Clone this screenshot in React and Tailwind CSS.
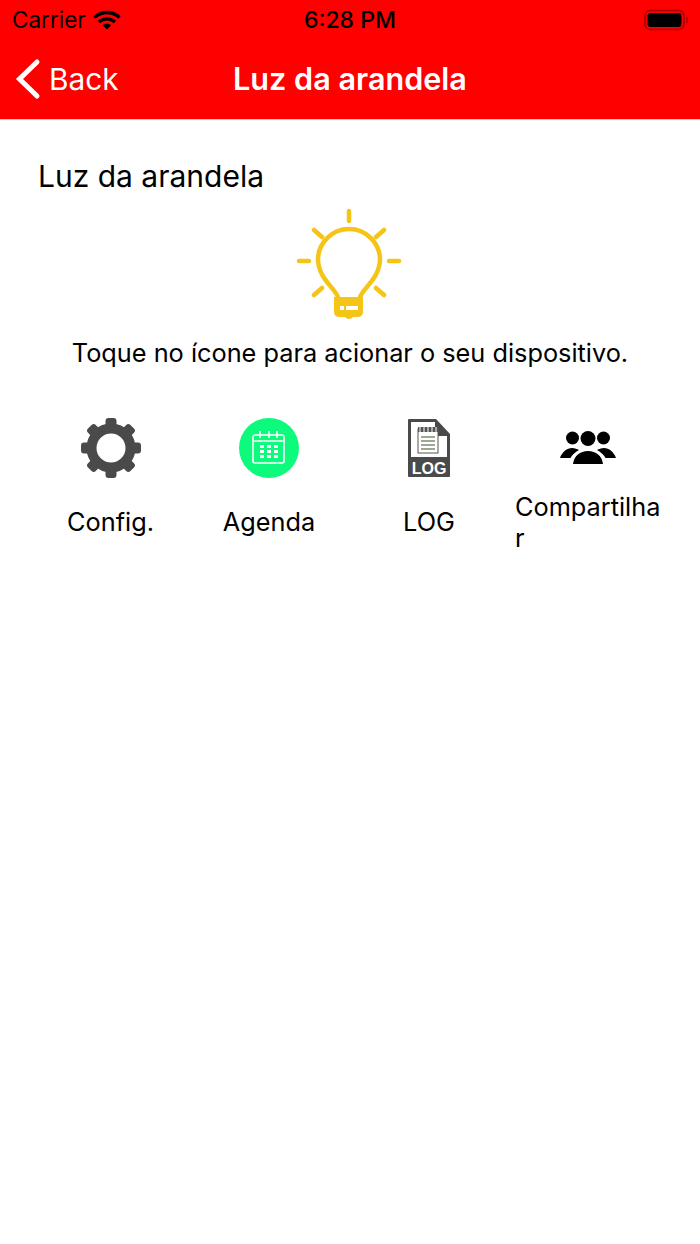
const WifiIcon = () => (
    <svg width="28" height="20" viewBox="0 0 28 20" fill="none" stroke="#000" strokeWidth="3.4">
        <path d="M1.5 7.5C8.5 0.8 19.5 0.8 26.5 7.5" />
        <path d="M6 12C10.5 7.8 17.5 7.8 22 12" />
        <path d="M14 19.5L9.8 15.3C12.2 13.3 15.8 13.3 18.2 15.3Z" fill="#000" stroke="none" />
    </svg>
);

const BatteryIcon = () => (
    <svg width="46" height="22" viewBox="0 0 46 22">
        <rect x="1" y="1.5" width="39" height="19" rx="5" fill="none" stroke="#a80000" strokeWidth="1.6" />
        <rect x="3.5" y="4" width="34" height="14" rx="3" fill="#000" />
        <rect x="42" y="8" width="2" height="6" rx="1" fill="#a80000" />
    </svg>
);

const BackChevron = () => (
    <svg width="28" height="42" viewBox="0 0 28 42" fill="none" stroke="#fff" strokeWidth="5" strokeLinecap="round" strokeLinejoin="miter">
        <path d="M23 4L5.5 21L23 38" />
    </svg>
);

const BulbIcon = () => (
    <svg width="120" height="120" viewBox="290 205 120 120" fill="none" stroke="#f4c417" strokeWidth="4.5" strokeLinecap="round">
        <path d="M349 211V221M299 261H309M389 261H399M314 230L322 237M384 230L376 237M314 295L322 288M384 295L376 288" />
        <path d="M338 297C334 287 319 279 318 260A31 31 0 0 1 380 260C379 279 364 287 360 297" />
        <path d="M334 297H363V312Q363 317 357 317H353Q349 321 345 317H340Q334 317 334 312Z" fill="#f4c417" stroke="none" />
        <rect x="340" y="306" width="4" height="4" fill="#fff" stroke="none" />
        <rect x="346" y="306" width="12" height="4" fill="#fff" stroke="none" />
    </svg>
);

const GearIcon = () => (
    <svg width="62" height="62" viewBox="0 0 62 62" fill="none">
        <circle cx="31" cy="31" r="19.5" stroke="#4a4a4a" strokeWidth="10" />
        <g fill="#4a4a4a">
            {[0, 45, 90, 135, 180, 225, 270, 315].map((angle) => (
                <rect key={angle} x="25.5" y="1" width="11" height="14" rx="3" transform={`rotate(${angle} 31 31)`} />
            ))}
        </g>
    </svg>
);

const CalendarIcon = () => (
    <svg width="60" height="60" viewBox="0 0 60 60" fill="none">
        <circle cx="30" cy="30" r="30" fill="#0dfb7c" />
        <g stroke="#fff" strokeWidth="1.6">
            <rect x="14" y="17" width="31" height="28" rx="2" />
            <path d="M14 23H45M21 13V20M30 13V20M38 13V20" />
        </g>
        <g fill="#fff">
            <rect x="21" y="27" width="4" height="3" /><rect x="28" y="27" width="4" height="3" /><rect x="35" y="27" width="4" height="3" />
            <rect x="21" y="32" width="4" height="3" /><rect x="28" y="32" width="4" height="3" /><rect x="35" y="32" width="4" height="3" />
            <rect x="21" y="37" width="4" height="3" /><rect x="28" y="37" width="4" height="3" /><rect x="35" y="37" width="4" height="3" />
        </g>
    </svg>
);

const LogIcon = () => (
    <svg width="44" height="60" viewBox="0 0 44 60">
        <path d="M2 1H29L43 16V58Q43 59 42 59H2Q1 59 1 58V2Q1 1 2 1Z" fill="#4a4a4a" />
        <path d="M4 4H28V18H40V39H4Z" fill="#fff" />
        <rect x="11" y="11" width="20" height="24" fill="#fff" stroke="#555" strokeWidth="1" />
        <path d="M11 9H31V14H11Z" fill="#555" />
        <path d="M13 9V14M17 9V14M21 9V14M25 9V14M29 9V14" stroke="#fff" strokeWidth="1" />
        <path d="M14 19H28M14 23H28M14 27H28M14 31H28" stroke="#7c8a72" strokeWidth="1.3" />
        <text x="22" y="55.5" textAnchor="middle" fill="#fff" fontFamily="'Liberation Sans', sans-serif" fontWeight="700" fontSize="16">LOG</text>
    </svg>
);

const PeopleIcon = () => (
    <svg width="56" height="34" viewBox="0 0 56 34" fill="#000">
        <circle cx="12.5" cy="7" r="6.5" />
        <circle cx="28" cy="7.5" r="7.5" />
        <circle cx="43.5" cy="7" r="6.5" />
        <path d="M0 27C2 21 7 17 12 17C15 17 17 18 19 19C15 21 12 24 10.5 27Z" />
        <path d="M56 27C54 21 49 17 44 17C41 17 39 18 37 19C41 21 44 24 45.5 27Z" />
        <path d="M13 33C14 25 20 20 28 20C36 20 42 25 43 33Z" />
    </svg>
);

const actions = [
    { label: 'Config.', icon: <GearIcon />, className: 'pl-[3px]' },
    { label: 'Agenda', icon: <CalendarIcon />, className: '' },
    { label: 'LOG', icon: <LogIcon />, className: '' },
];

export default function App() {
    return (
        <div className="min-h-[1244px] bg-white text-black font-['Inter',sans-serif]">
            <header className="h-[120px] bg-[#ff0000] border-b border-[#d0d0d0]">
                <div className="h-10 px-[13px] grid grid-cols-3 items-center text-[22.5px] leading-none">
                    <div className="flex items-center gap-[7px] -ml-[1px]">
                        <span>Carrier</span>
                        <WifiIcon />
                    </div>
                    <div className="text-center font-medium text-[23px]">6:28 PM</div>
                    <div className="flex justify-end -mr-[3px]"><BatteryIcon /></div>
                </div>
                <div className="h-[78px] grid grid-cols-[1fr_auto_1fr] items-center text-white">
                    <div className="flex items-center pl-[14px] text-[29.8px]">
                        <BackChevron />
                        <span className="ml-[7px]">Back</span>
                    </div>
                    <div className="font-semibold text-[30.6px]">Luz da arandela</div>
                    <div />
                </div>
            </header>
            <main>
                <h1 className="pl-[38px] pt-[38px] text-[30px] leading-9">Luz da arandela</h1>
                <div className="flex justify-center mt-[11px]"><BulbIcon /></div>
                <p className="text-center text-[25.3px] leading-8 mt-[12px]">Toque no ícone para acionar o seu dispositivo.</p>
                <div className="ml-[29px] mr-[31px] mt-[49px] grid grid-cols-4 text-[25.3px] leading-[31px]">
                    {actions.map((action) => (
                        <div key={action.label} className={`flex flex-col items-center ${action.className}`}>
                            <div className="h-[60px] flex items-center justify-center">{action.icon}</div>
                            <span className="mt-[28px]">{action.label}</span>
                        </div>
                    ))}
                    <div className="flex flex-col">
                        <div className="h-[60px] flex items-center justify-center pr-[2px]"><PeopleIcon /></div>
                        <span className="mt-[13px] pl-[6px] pr-[4px] break-all">Compartilhar</span>
                    </div>
                </div>
            </main>
        </div>
    );
}
